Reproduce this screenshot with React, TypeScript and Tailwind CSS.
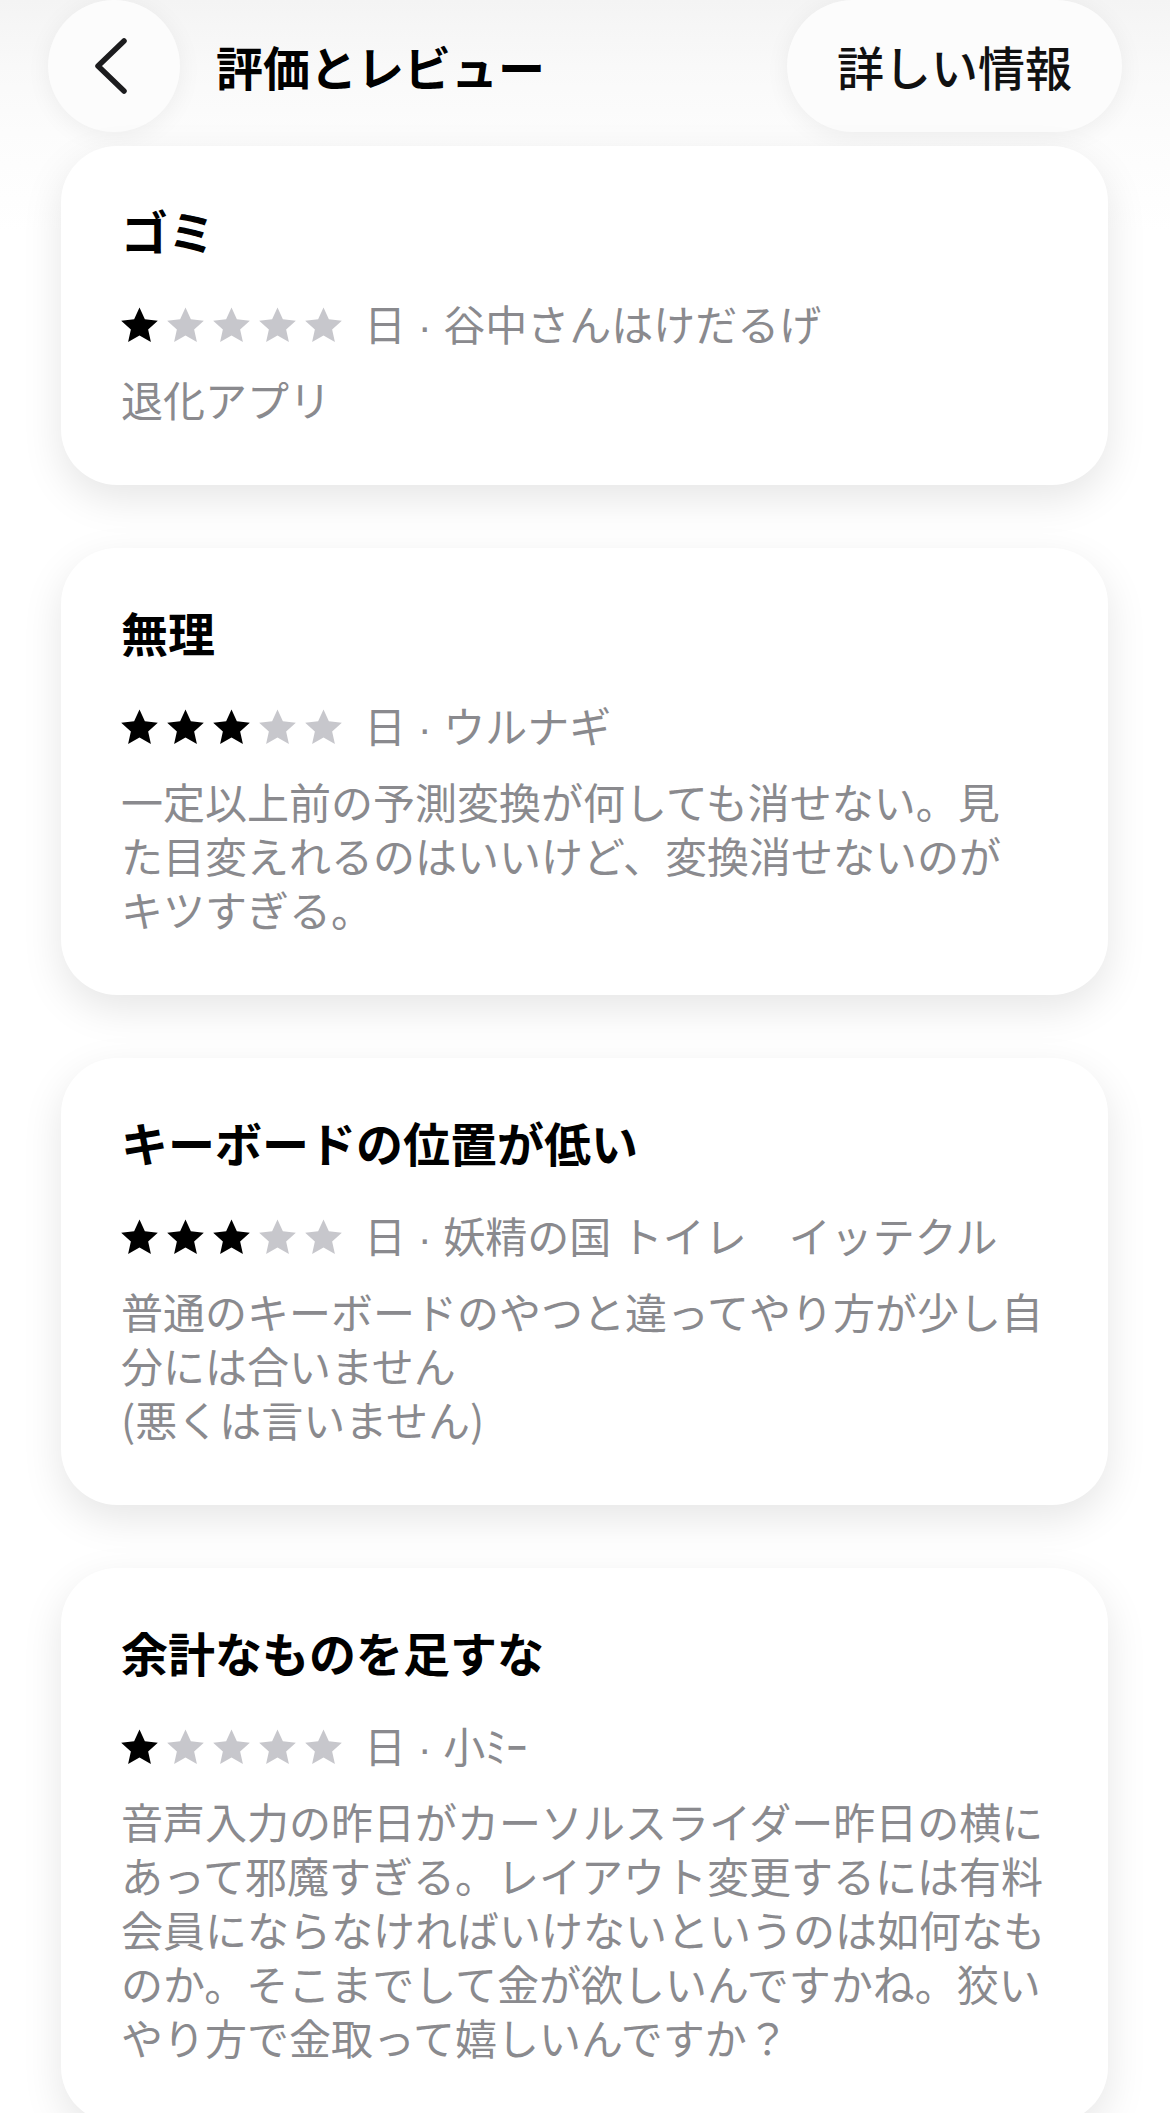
import React from "react";

const FONT = '"Noto Sans CJK JP", "Noto Sans", sans-serif';

type Review = { title: string; rating: number; author: string; lines: string[] };

const reviews: Review[] = [
  { title: "ゴミ", rating: 1, author: "谷中さんはけだるげ", lines: ["退化アプリ"] },
  {
    title: "無理",
    rating: 3,
    author: "ウルナギ",
    lines: [
      "一定以上前の予測変換が何しても消せない。見",
      "た目変えれるのはいいけど、変換消せないのが",
      "キツすぎる。",
    ],
  },
  {
    title: "キーボードの位置が低い",
    rating: 3,
    author: "妖精の国 トイレ　イッテクル",
    lines: ["普通のキーボードのやつと違ってやり方が少し自", "分には合いません", "(悪くは言いません)"],
  },
  {
    title: "余計なものを足すな",
    rating: 1,
    author: "小ﾐｰ",
    lines: [
      "音声入力の昨日がカーソルスライダー昨日の横に",
      "あって邪魔すぎる。レイアウト変更するには有料",
      "会員にならなければいけないというのは如何なも",
      "のか。そこまでして金が欲しいんですかね。狡い",
      "やり方で金取って嬉しいんですか？",
    ],
  },
];

function Star({ filled }: { filled: boolean }) {
  return (
    <svg viewBox="1.5 1.6 21 20.2" className="w-[37px] h-[36px]" fill={filled ? "#000000" : "#c7c7cc"}>
      <path
        d="M12 1.8l3.05 6.7 7.35.75-5.5 4.95 1.57 7.2L12 17.7l-6.47 3.7 1.57-7.2-5.5-4.95 7.35-.75z"
        strokeLinejoin="round"
      />
    </svg>
  );
}

function Card({ r }: { r: Review }) {
  return (
    <div className="bg-white rounded-[56px] shadow-[0_14px_40px_rgba(0,0,0,0.10)] pt-[56px] pb-[59px] px-[60px]">
      <div className="text-[47px] leading-[56px] font-bold text-black whitespace-nowrap">{r.title}</div>
      <div className="mt-[40px] flex items-center h-[54px]">
        <div className="flex items-center gap-[9px]">
          {[0, 1, 2, 3, 4].map((i) => (
            <Star key={i} filled={i < r.rating} />
          ))}
        </div>
        <div className="ml-[22px] text-[42px] leading-[54px] text-[#8a8a8e] whitespace-pre">
          日<span style={{ fontFamily: '"Liberation Sans", sans-serif' }}>{" · "}</span>
          {r.author}
        </div>
      </div>
      <div className="mt-[20px] text-[42px] leading-[54px] text-[#8a8a8e]">
        {r.lines.map((l, i) => (
          <div key={i} className="whitespace-nowrap">
            {l}
          </div>
        ))}
      </div>
    </div>
  );
}

export default function App() {
  return (
    <div className="w-[1170px] h-[2113px] overflow-hidden bg-white" style={{ fontFamily: FONT }}>
      <div className="h-[132px] flex items-center justify-between px-[48px] bg-gradient-to-b from-[#f4f4f4] via-[#f9f9f9] to-[#fcfcfc]">
        <div className="flex items-center gap-[36px]">
          <div className="w-[132px] h-[132px] rounded-full bg-[#fcfcfc] shadow-[0_4px_24px_rgba(0,0,0,0.06)] flex items-center justify-center">
            <svg viewBox="0 0 36 60" className="w-[36px] h-[60px] -ml-[6px]" fill="none" stroke="#1c1c1e" strokeWidth="5.5" strokeLinecap="round" strokeLinejoin="round">
              <path d="M31 5 L5 30 L31 55" />
            </svg>
          </div>
          <div className="text-[47px] leading-[56px] font-bold text-black">評価とレビュー</div>
        </div>
        <div className="h-[132px] px-[50px] rounded-full bg-[#fcfcfc] shadow-[0_4px_24px_rgba(0,0,0,0.06)] flex items-center">
          <span className="text-[47px] leading-[56px] font-medium text-[#111]">詳しい情報</span>
        </div>
      </div>
      <div className="pt-[14px] pl-[61px] pr-[62px] flex flex-col gap-[63px] bg-gradient-to-b from-[#fcfcfc] to-white to-[5%]">
        {reviews.map((r, i) => (
          <Card key={i} r={r} />
        ))}
      </div>
    </div>
  );
}
